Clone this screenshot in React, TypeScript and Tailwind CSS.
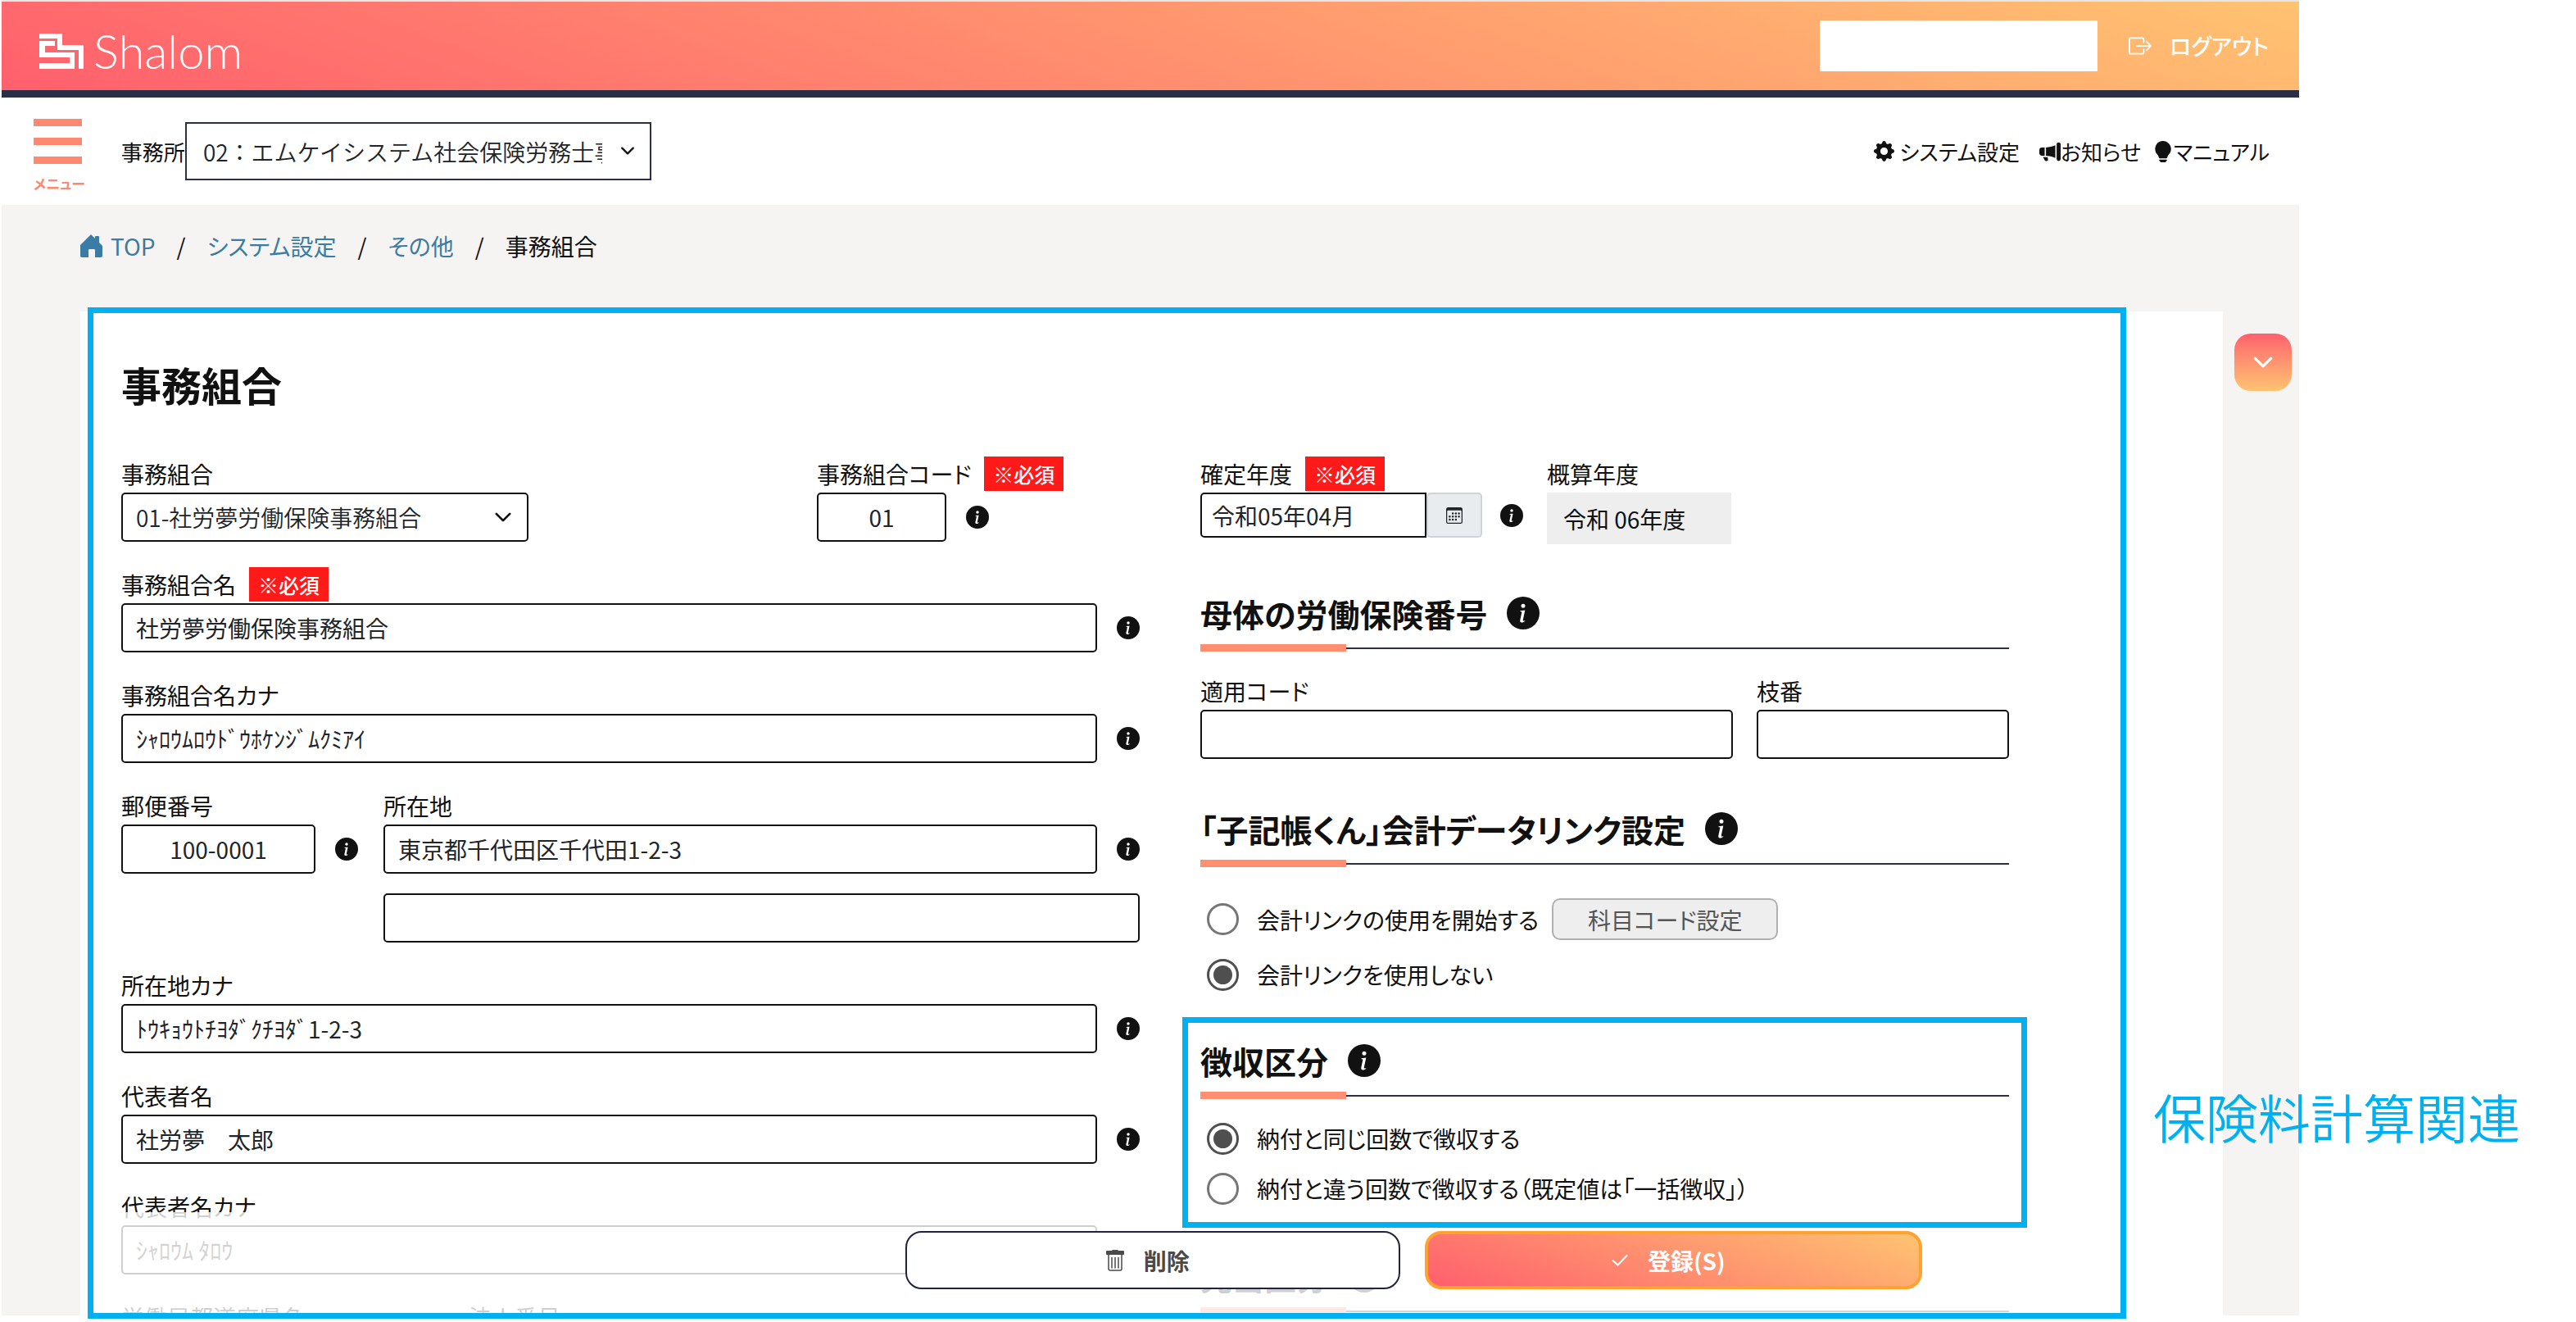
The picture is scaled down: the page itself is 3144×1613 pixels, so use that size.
import React from "react";
import {
  BsBoxArrowRight,
  BsCalendar3,
  BsChevronDown,
  BsGearFill,
  BsInfoCircleFill,
  BsLightbulbFill,
  BsMegaphoneFill,
} from "react-icons/bs";

function Logo() {
  return (
    <svg viewBox="0 0 54 43" className="w-[54px] h-[43px]" fill="currentColor" aria-hidden="true">
      <path d="M0 0H28V14H54V43H48V20H22V6H0Z" />
      <path d="M0 9H19V15H7V23H43V43H0V36H37V29H0Z" />
    </svg>
  );
}

function HouseIcon() {
  return (
    <svg viewBox="0 0 27 28" className="w-[27px] h-7" fill="currentColor" aria-hidden="true">
      <path d="M13 0 18 5V3Q18 2 19 2H22Q23 2 23 3V10L27 14V26Q27 28 25 28H18V19Q18 18 17 18H11Q10 18 10 19V28H2Q0 28 0 26V13Z" />
    </svg>
  );
}

function TrashIcon() {
  return (
    <svg viewBox="0 0 22 26" className="w-[22px] h-[26px]" fill="none" stroke="currentColor" aria-hidden="true">
      <path d="M1 1H7.500V0H14.500V1H21Q22 1 22 2V5Q22 6 21 6H1Q0 6 0 5V2Q0 1 1 1Z" fill="currentColor" stroke="none" />
      <path d="M3 6V23Q3 25 5 25H17Q19 25 19 23V6M7 9.500V22M11 9.500V22M15 9.500V22" strokeWidth="1.500" strokeLinecap="round" />
    </svg>
  );
}

function CheckIcon() {
  return (
    <svg viewBox="0 0 20 14" className="w-5 h-3.5" fill="none" stroke="currentColor" aria-hidden="true">
      <path d="M1.500 7 7.500 12.500 18.500 1" strokeWidth="2" strokeLinecap="round" strokeLinejoin="round" />
    </svg>
  );
}

function InfoButton(props: { label: string; large?: boolean }) {
  return (
    <button type="button" aria-label={props.label + "の説明"} className="shrink-0 text-[#111]">
      <BsInfoCircleFill className={props.large ? "size-10" : "size-7"} />
    </button>
  );
}

function Required() {
  return (
    <span className="flex items-center h-[42px] px-[11px] bg-[#ff1a1a] text-white text-[25px] leading-[36px] font-medium">
      ※必須
    </span>
  );
}

function Label(props: { htmlFor?: string; required?: boolean; children: string }) {
  return (
    <div className="flex items-start gap-4 h-11 whitespace-nowrap">
      <label htmlFor={props.htmlFor}>{props.children}</label>
      {props.required && <Required />}
    </div>
  );
}

type InputProps = {
  id: string;
  value?: string;
  className?: string;
  label?: string;
};

function TextInput(props: InputProps) {
  return (
    <input
      id={props.id}
      type="text"
      aria-label={props.label}
      defaultValue={props.value}
      className={
        "h-[60px] min-w-0 px-4 bg-white border-2 border-[#111] rounded-[5px] text-[#212529] " +
        (props.className ?? "w-full")
      }
    />
  );
}

type FieldProps = {
  id: string;
  label: string;
  value?: string;
  required?: boolean;
};

// label on top, full-width input with the help icon on its right
function InfoField(props: FieldProps) {
  return (
    <div>
      <Label htmlFor={props.id} required={props.required}>
        {props.label}
      </Label>
      <div className="flex items-center gap-6">
        <TextInput id={props.id} value={props.value} className="flex-1" />
        <InfoButton label={props.label} />
      </div>
    </div>
  );
}

function SectionHeading(props: { children: string }) {
  return (
    <div>
      <div className="flex items-center gap-6 h-[58px] mb-[9px]">
        <h2 className="text-[39px] leading-[56px] font-bold whitespace-nowrap">{props.children}</h2>
        <InfoButton label={props.children} large />
      </div>
      <div className="flex items-center">
        <div className="w-[18%] h-[9px] bg-[#ff8f70]" />
        <div className="flex-1 h-[2px] bg-[#2b2f45]" />
      </div>
    </div>
  );
}

type RadioProps = {
  name: string;
  id: string;
  checked?: boolean;
  children: string;
};

function Radio(props: RadioProps) {
  return (
    <div className="flex items-center gap-[22px] h-10 pl-2 whitespace-nowrap">
      <input
        type="radio"
        id={props.id}
        name={props.name}
        defaultChecked={props.checked}
        className="appearance-none size-[39px] p-[5px] border-[3px] border-[#767676] rounded-full bg-clip-content checked:border-[#4f4f4f] checked:bg-[#4f4f4f]"
      />
      <label htmlFor={props.id}>{props.children}</label>
    </div>
  );
}

function Header() {
  return (
    <header className="flex items-center justify-between h-[117px] pl-[46px] pr-[37px] border-b-[9px] border-[#2b2f45] bg-[linear-gradient(20deg,#ff5f6d,#ffc371)] bg-origin-border text-white">
      <a href="#" className="flex items-center gap-3 pt-3">
        <Logo />
        <span className="font-[Lato,sans-serif] text-[58px] leading-[60px] font-light">Shalom</span>
      </a>
      <div className="flex items-center">
        <div className="w-[339px] h-[62px] bg-white" />
        <a href="#" className="flex items-center gap-[22px] ml-[38px] text-[27px] font-medium">
          <BsBoxArrowRight className="size-7" />
          ログアウト
        </a>
      </div>
    </header>
  );
}

function Toolbar() {
  return (
    <div className="flex items-center justify-between h-[131px] pl-[39px] pr-[36px] bg-white">
      <div className="flex items-center">
        <button type="button" className="flex flex-col items-start pt-3 text-[#ff8870]">
          <span className="flex flex-col gap-[14px]">
            <span className="w-[59px] h-[9px] bg-[#ff8870]" />
            <span className="w-[59px] h-[9px] bg-[#ff8870]" />
            <span className="w-[59px] h-[9px] bg-[#ff8870]" />
          </span>
          <span className="mt-3 text-[17px] leading-[24px] font-bold">メニュー</span>
        </button>
        <label htmlFor="office" className="ml-[44px] text-[26px]">
          事務所
        </label>
        <div className="relative">
          <select
            id="office"
            className="appearance-none block w-[569px] h-[71px] pl-5 pr-[58px] bg-white border-2 border-[#2b2f45] text-[28px] font-[350] [font-feature-settings:normal] text-[#212529]"
          >
            <option>02：エムケイシステム社会保険労務士事務所</option>
          </select>
          <BsChevronDown className="absolute right-5 top-[26px] size-[18px] stroke-1 pointer-events-none" />
        </div>
      </div>
      <nav className="flex items-center text-[26px]">
        <a href="#" className="flex items-center gap-[6px]">
          <BsGearFill className="size-[25px]" />
          システム設定
        </a>
        <a href="#" className="flex items-center ml-6">
          <BsMegaphoneFill className="size-[26px]" />
          お知らせ
        </a>
        <a href="#" className="flex items-center ml-[14px]">
          <BsLightbulbFill className="size-[26px]" />
          マニュアル
        </a>
      </nav>
    </div>
  );
}

function Breadcrumb() {
  return (
    <nav className="flex items-center h-[100px] pl-24 gap-[26px] leading-[40px]">
      <a href="#" className="flex items-center gap-[10px] text-[#3a7ca5]">
        <HouseIcon />
        TOP
      </a>
      <span>/</span>
      <a href="#" className="text-[#3a7ca5]">
        システム設定
      </a>
      <span>/</span>
      <a href="#" className="text-[#3a7ca5]">
        その他
      </a>
      <span>/</span>
      <span>事務組合</span>
    </nav>
  );
}

function LeftColumn() {
  return (
    <div className="flex flex-col gap-[31px]">
      <div className="grid grid-cols-[849fr_394fr]">
        <div>
          <Label htmlFor="union">事務組合</Label>
          <div className="relative w-[497px]">
            <select
              id="union"
              className="appearance-none block w-full h-[60px] pl-4 pr-14 bg-white border-2 border-[#111] rounded-[5px] font-[350] text-[#212529]"
            >
              <option>01-社労夢労働保険事務組合</option>
            </select>
            <BsChevronDown className="absolute right-5 top-[19px] size-[22px] stroke-1 pointer-events-none" />
          </div>
        </div>
        <div>
          <Label htmlFor="union-code" required>
            事務組合コード
          </Label>
          <div className="flex items-center gap-6">
            <TextInput id="union-code" value="01" className="w-[158px] text-center" />
            <InfoButton label="事務組合コード" />
          </div>
        </div>
      </div>
      <InfoField id="union-name" label="事務組合名" value="社労夢労働保険事務組合" required />
      <InfoField id="union-kana" label="事務組合名カナ" value="ｼｬﾛｳﾑﾛｳﾄﾞｳﾎｹﾝｼﾞﾑｸﾐｱｲ" />
      <div className="flex gap-[31px]">
        <div>
          <Label htmlFor="zip">郵便番号</Label>
          <div className="flex items-center gap-6">
            <TextInput id="zip" value="100-0001" className="w-[237px] text-center" />
            <InfoButton label="郵便番号" />
          </div>
        </div>
        <div className="flex-1 flex flex-col gap-6">
          <InfoField id="address" label="所在地" value="東京都千代田区千代田1-2-3" />
          <TextInput id="address2" label="所在地2" />
        </div>
      </div>
      <InfoField id="address-kana" label="所在地カナ" value="ﾄｳｷｮｳﾄﾁﾖﾀﾞｸﾁﾖﾀﾞ1-2-3" />
      <InfoField id="owner" label="代表者名" value="社労夢　太郎" />
      <InfoField id="owner-kana" label="代表者名カナ" value="ｼｬﾛｳﾑ ﾀﾛｳ" />
      <div className="grid grid-cols-[424fr_819fr]">
        <Label>労働局都道府県名</Label>
        <Label>法人番号</Label>
      </div>
    </div>
  );
}

function RightColumn() {
  return (
    <div>
      <div className="flex">
        <div className="w-[423px]">
          <Label htmlFor="year" required>
            確定年度
          </Label>
          <div className="flex items-center">
            <input
              id="year"
              type="text"
              defaultValue="令和05年04月"
              className="w-[276px] h-[55px] px-3 border-2 border-[#111] rounded-l-[5px] text-[#212529]"
            />
            <button
              type="button"
              aria-label="カレンダー"
              className="flex items-center justify-center w-[68px] h-[55px] bg-[#e9ecef] border-2 border-[#ced4da] rounded-[5px] text-[#212529]"
            >
              <BsCalendar3 className="size-5" />
            </button>
            <div className="flex ml-[22px]">
              <InfoButton label="確定年度" />
            </div>
          </div>
        </div>
        <div>
          <Label>概算年度</Label>
          <div className="flex items-center w-[225px] h-[63px] pl-5 bg-[#eee]">令和 06年度</div>
        </div>
      </div>

      <div className="mt-[55px]">
        <SectionHeading>母体の労働保険番号</SectionHeading>
        <div className="grid grid-cols-[650fr_308fr] gap-[29px] mt-[27px]">
          <div>
            <Label htmlFor="apply-code">適用コード</Label>
            <TextInput id="apply-code" />
          </div>
          <div>
            <Label htmlFor="branch">枝番</Label>
            <TextInput id="branch" />
          </div>
        </div>
      </div>

      <div className="mt-[56px]">
        <SectionHeading>「子記帳くん」会計データリンク設定</SectionHeading>
        <div className="flex items-center gap-4 mt-[38px]">
          <Radio name="link" id="link-on">
            会計リンクの使用を開始する
          </Radio>
          <button
            type="button"
            disabled
            className="w-[276px] h-[51px] bg-[#eee] border-2 border-[#b0b0b0] rounded-[10px] text-[#555]"
          >
            科目コード設定
          </button>
        </div>
        <div className="mt-[22px]">
          <Radio name="link" id="link-off" checked>
            会計リンクを使用しない
          </Radio>
        </div>
      </div>

      <div className="relative mt-[56px]">
        <SectionHeading>徴収区分</SectionHeading>
        <div className="flex flex-col gap-[21px] mt-7">
          <Radio name="collect" id="collect-same" checked>
            納付と同じ回数で徴収する
          </Radio>
          <Radio name="collect" id="collect-other">
            納付と違う回数で徴収する（既定値は「一括徴収」）
          </Radio>
        </div>
        <div className="absolute z-20 -inset-x-[22px] -top-6 -bottom-7 border-[7px] border-[#00b0f0] pointer-events-none" />
      </div>

      <div className="mt-[58px]">
        <SectionHeading>充当区分</SectionHeading>
      </div>
    </div>
  );
}

function ActionBar() {
  return (
    <div className="absolute z-10 inset-x-0 bottom-0 flex gap-[30px] h-[126px] pt-[23px] pl-[1007px] pr-[367px] bg-white/80 text-[28px] font-bold">
      <button
        type="button"
        className="flex-1 flex items-center justify-center gap-6 h-[71px] pr-3 bg-white border-2 border-[#1f2340] rounded-[20px] text-[#4a4a4a]"
      >
        <TrashIcon />
        削除
      </button>
      <button
        type="button"
        className="flex-1 flex items-center justify-center gap-6 h-[71px] pr-3 bg-[linear-gradient(20deg,#ff5f6d,#ffc371)] border-4 border-[#ffa22f] rounded-[20px] text-white"
      >
        <CheckIcon />
        登録(S)
      </button>
    </div>
  );
}

function App() {
  return (
    <div
      lang="ja"
      className="relative flex flex-col h-screen pl-[2px] pr-[338px] pb-2 bg-white text-[#111] text-[28px] leading-[42px] font-['Noto_Sans_CJK_JP',sans-serif] [font-feature-settings:'palt']"
    >
      <div className="h-[2px] shrink-0 bg-[#e6e6e6]" />
      <div className="shrink-0">
        <Header />
        <Toolbar />
      </div>
      <div className="flex-1 min-h-0 flex flex-col bg-[#f5f4f2]">
        <Breadcrumb />
        <main className="relative flex-1 min-h-0 flex mt-[30px] pl-24">
          <div className="relative flex-1 overflow-hidden bg-white pt-[52px] pl-[50px] pr-[261px]">
            <h1 className="text-[49px] leading-[74px] font-bold mb-[51px]">事務組合</h1>
            <div className="grid grid-cols-[1243fr_987fr] gap-[74px]">
              <LeftColumn />
              <RightColumn />
            </div>
            <ActionBar />
          </div>
          <div className="w-[93px] pt-[27px] pl-[14px]">
            <button
              type="button"
              aria-label="下へ移動"
              className="flex items-center justify-center size-[70px] rounded-[20px] bg-linear-to-b from-[#ff5f6d] to-[#ffc371] text-white"
            >
              <BsChevronDown className="size-[26px] stroke-1" />
            </button>
          </div>
          <div className="absolute z-20 left-[105px] right-[211px] -top-[5px] -bottom-1 border-[7px] border-[#00b0f0] pointer-events-none" />
        </main>
      </div>
      <p className="absolute right-[68px] bottom-[204px] z-30 text-[64px] leading-[96px] font-[350] text-[#00b0f0] [font-feature-settings:normal]">
        保険料計算関連
      </p>
    </div>
  );
}

export default App;
